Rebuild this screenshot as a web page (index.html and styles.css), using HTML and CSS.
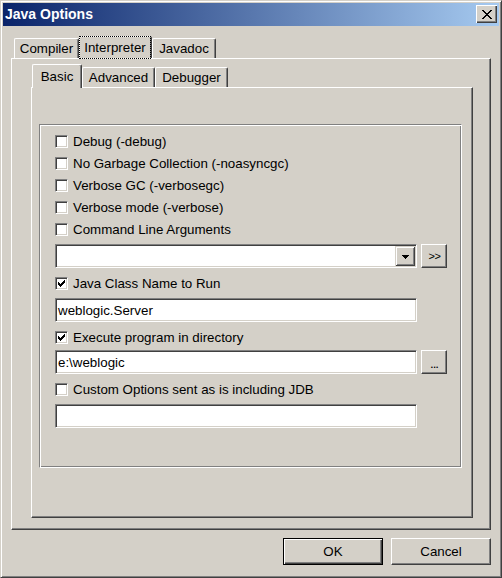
FILE: index.html
```html
<!DOCTYPE html>
<html>
<head>
<meta charset="utf-8">
<title>Java Options</title>
<link rel="stylesheet" href="styles.css">
</head>
<body>
<div class="window">
  <div class="titlebar">
    <span class="title">Java Options</span>
    <button class="close" aria-label="Close">
      <svg width="10" height="9" viewBox="0 0 10 9" shape-rendering="crispEdges">
        <rect x="0" y="0" width="2" height="1"/><rect x="8" y="0" width="2" height="1"/>
        <rect x="1" y="1" width="2" height="1"/><rect x="7" y="1" width="2" height="1"/>
        <rect x="2" y="2" width="2" height="1"/><rect x="6" y="2" width="2" height="1"/>
        <rect x="3" y="3" width="4" height="1"/>
        <rect x="4" y="4" width="2" height="1"/>
        <rect x="3" y="5" width="4" height="1"/>
        <rect x="2" y="6" width="2" height="1"/><rect x="6" y="6" width="2" height="1"/>
        <rect x="1" y="7" width="2" height="1"/><rect x="7" y="7" width="2" height="1"/>
        <rect x="0" y="8" width="2" height="1"/><rect x="8" y="8" width="2" height="1"/>
      </svg>
    </button>
  </div>
  <div class="client">
    <div class="tabs outer-tabs">
      <div class="tab w-compiler">Compiler</div>
      <div class="tab selected focus w-interp"><span>Interpreter</span></div>
      <div class="tab w-javadoc">Javadoc</div>
    </div>
    <div class="panel outer-panel">
      <div class="tabs inner-tabs">
        <div class="tab selected joined w-basic">Basic</div>
        <div class="tab w-adv">Advanced</div>
        <div class="tab w-dbg">Debugger</div>
      </div>
      <div class="panel inner-panel">
        <div class="group">
          <div class="check-row"><span class="cb"></span><span>Debug (-debug)</span></div>
          <div class="check-row"><span class="cb"></span><span>No Garbage Collection (-noasyncgc)</span></div>
          <div class="check-row"><span class="cb"></span><span>Verbose GC (-verbosegc)</span></div>
          <div class="check-row"><span class="cb"></span><span>Verbose mode (-verbose)</span></div>
          <div class="check-row"><span class="cb"></span><span>Command Line Arguments</span></div>
          <div class="field-row">
            <div class="field combo">
              <span class="combo-btn">
                <svg width="7" height="4" viewBox="0 0 7 4" shape-rendering="crispEdges">
                  <rect x="0" y="0" width="7" height="1"/><rect x="1" y="1" width="5" height="1"/>
                  <rect x="2" y="2" width="3" height="1"/><rect x="3" y="3" width="1" height="1"/>
                </svg>
              </span>
            </div>
            <button class="btn small chev">&gt;&gt;</button>
          </div>
          <div class="check-row"><span class="cb checked"><svg width="7" height="7" viewBox="0 0 7 7" shape-rendering="crispEdges"><rect x="6" y="0" width="1" height="1"/><rect x="5" y="1" width="2" height="1"/><rect x="0" y="2" width="1" height="1"/><rect x="4" y="2" width="3" height="1"/><rect x="0" y="3" width="2" height="1"/><rect x="3" y="3" width="3" height="1"/><rect x="0" y="4" width="5" height="1"/><rect x="1" y="5" width="3" height="1"/><rect x="2" y="6" width="1" height="1"/></svg></span><span>Java Class Name to Run</span></div>
          <div class="field-row">
            <div class="field">weblogic.Server</div>
          </div>
          <div class="check-row"><span class="cb checked"><svg width="7" height="7" viewBox="0 0 7 7" shape-rendering="crispEdges"><rect x="6" y="0" width="1" height="1"/><rect x="5" y="1" width="2" height="1"/><rect x="0" y="2" width="1" height="1"/><rect x="4" y="2" width="3" height="1"/><rect x="0" y="3" width="2" height="1"/><rect x="3" y="3" width="3" height="1"/><rect x="0" y="4" width="5" height="1"/><rect x="1" y="5" width="3" height="1"/><rect x="2" y="6" width="1" height="1"/></svg></span><span>Execute program in directory</span></div>
          <div class="field-row tight">
            <div class="field">e:\weblogic</div>
            <button class="btn small dots">...</button>
          </div>
          <div class="check-row"><span class="cb"></span><span>Custom Options sent as is including JDB</span></div>
          <div class="field-row">
            <div class="field"></div>
          </div>
        </div>
      </div>
    </div>
    <div class="footer">
      <button class="btn big default">OK</button>
      <button class="btn big">Cancel</button>
    </div>
  </div>
</div>
</body>
</html>
```

FILE: styles.css
```css
* { box-sizing: border-box; }
html, body { margin: 0; padding: 0; }
body {
  width: 502px;
  height: 578px;
  overflow: hidden;
  background: #D4D0C8;
  font-family: "Liberation Sans", Arial, sans-serif;
  font-size: 13.33px;
  color: #000;
}
.window {
  width: 502px;
  height: 578px;
  background: #D4D0C8;
  border: 1px solid;
  border-color: #D4D0C8 #404040 #404040 #D4D0C8;
  box-shadow: inset 1px 1px #fff, inset -1px -1px #808080;
  padding: 2px;
  display: flex;
  flex-direction: column;
}
.titlebar {
  height: 23px;
  flex: none;
  background: linear-gradient(to right, #0A246A, #A6CAF0);
  display: flex;
  align-items: flex-start;
  padding: 0 2px 0 2px;
}
.title {
  color: #fff;
  font-weight: bold;
  font-size: 14px;
  line-height: 23px;
  white-space: nowrap;
}
.close {
  margin: 2px 0 0 auto;
  width: 21px;
  height: 18px;
  padding: 0;
  border: 0;
  background: #D4D0C8;
  box-shadow: inset 1px 1px #fff, inset -1px -1px #404040, inset -2px -2px #808080;
  display: flex;
  align-items: center;
  justify-content: center;
}
.close svg { fill: #000; display: block; }
.client {
  flex: 1;
  padding: 0 8px;
  display: flex;
  flex-direction: column;
}
.tabs {
  display: flex;
  align-items: flex-end;
  flex: none;
}
.outer-tabs {
  margin-top: 10px;
  padding-left: 3px;
  height: 22px;
}
.tab {
  height: 20px;
  background: #D4D0C8;
  border-top: 1px solid #fff;
  border-left: 1px solid #fff;
  border-right: 1px solid #404040;
  box-shadow: inset -1px 0 #808080;
  border-radius: 2px 2px 0 0;
  display: flex;
  align-items: center;
  justify-content: center;
  white-space: nowrap;
  position: relative;
}
.tab.selected { height: 22px; }
.tab.joined { height: 24px; margin-bottom: -1px; z-index: 1; }
.tab.focus span {
  position: absolute;
  left: 0; top: 0; right: 1px; bottom: 0;
  display: flex;
  align-items: center;
  justify-content: center;
  outline: 1px dotted #000;
  outline-offset: 0;
}
.w-compiler { width: 65px; }
.w-interp { width: 73px; }
.w-javadoc { width: 64px; }
.w-basic { width: 50px; }
.w-adv { width: 73px; }
.w-dbg { width: 73px; }
.panel {
  border: 1px solid;
  border-color: #fff #404040 #404040 #fff;
  box-shadow: inset -1px -1px #808080;
}
.outer-panel {
  width: 480px;
  height: 472px;
  flex: none;
}
.inner-tabs {
  margin: 5px 0 0 19px;
  padding-left: 1px;
  height: 23px;
}
.inner-panel {
  margin-left: 19px;
  width: 442px;
  height: 431px;
}
.group {
  margin: 36px 0 0 7px;
  width: 423px;
  height: 344px;
  border: 1px solid;
  border-color: #808080 #fff #fff #808080;
  box-shadow: inset 1px 1px #fff, inset -1px -1px #808080;
  padding: 5px 0 0 15px;
}
.check-row {
  height: 22px;
  display: flex;
  align-items: center;
  white-space: nowrap;
}
.cb {
  width: 13px;
  height: 13px;
  flex: none;
  background: #fff;
  border: 1px solid;
  border-color: #808080 #fff #fff #808080;
  box-shadow: inset 1px 1px #404040, inset -1px -1px #D4D0C8;
  margin-right: 5px;
  display: flex;
  align-items: center;
  justify-content: center;
}
.cb svg { display: block; fill: #000; }
.field-row {
  display: flex;
  gap: 4px;
  margin: 4px 0;
}
.field-row.tight { margin-top: 2px; }
.field {
  width: 362px;
  height: 24px;
  background: #fff;
  border: 1px solid;
  border-color: #808080 #fff #fff #808080;
  box-shadow: inset 1px 1px #404040, inset -1px -1px #D4D0C8;
  padding: 0 0 0 2px;
  display: flex;
  align-items: center;
  white-space: nowrap;
}
.combo { padding: 1px; justify-content: flex-end; }
.combo-btn {
  width: 20px;
  height: 20px;
  background: #D4D0C8;
  box-shadow: inset 1px 1px #D4D0C8, inset -1px -1px #404040, inset 2px 2px #fff, inset -2px -2px #808080;
  display: flex;
  align-items: center;
  justify-content: center;
}
.combo-btn svg { display: block; fill: #000; margin-top: 1px; }
.btn {
  background: #D4D0C8;
  border: 1px solid;
  border-color: #fff #404040 #404040 #fff;
  box-shadow: inset -1px -1px #808080;
  font-family: inherit;
  font-size: 13.33px;
  color: #000;
  padding: 0;
}
.small {
  width: 26px;
  height: 24px;
  flex: none;
}
.chev {
  font-size: 11px;
  letter-spacing: -0.5px;
  padding-left: 1px;
}
.dots {
  letter-spacing: -1px;
  padding-top: 2px;
}
.footer {
  display: flex;
  justify-content: flex-end;
  gap: 8px;
  margin-top: 8px;
}
.big {
  width: 100px;
  height: 27px;
}
.default {
  border: 1px solid #000;
  box-shadow: inset 1px 1px #fff, inset -1px -1px #404040, inset -2px -2px #808080;
}
```
